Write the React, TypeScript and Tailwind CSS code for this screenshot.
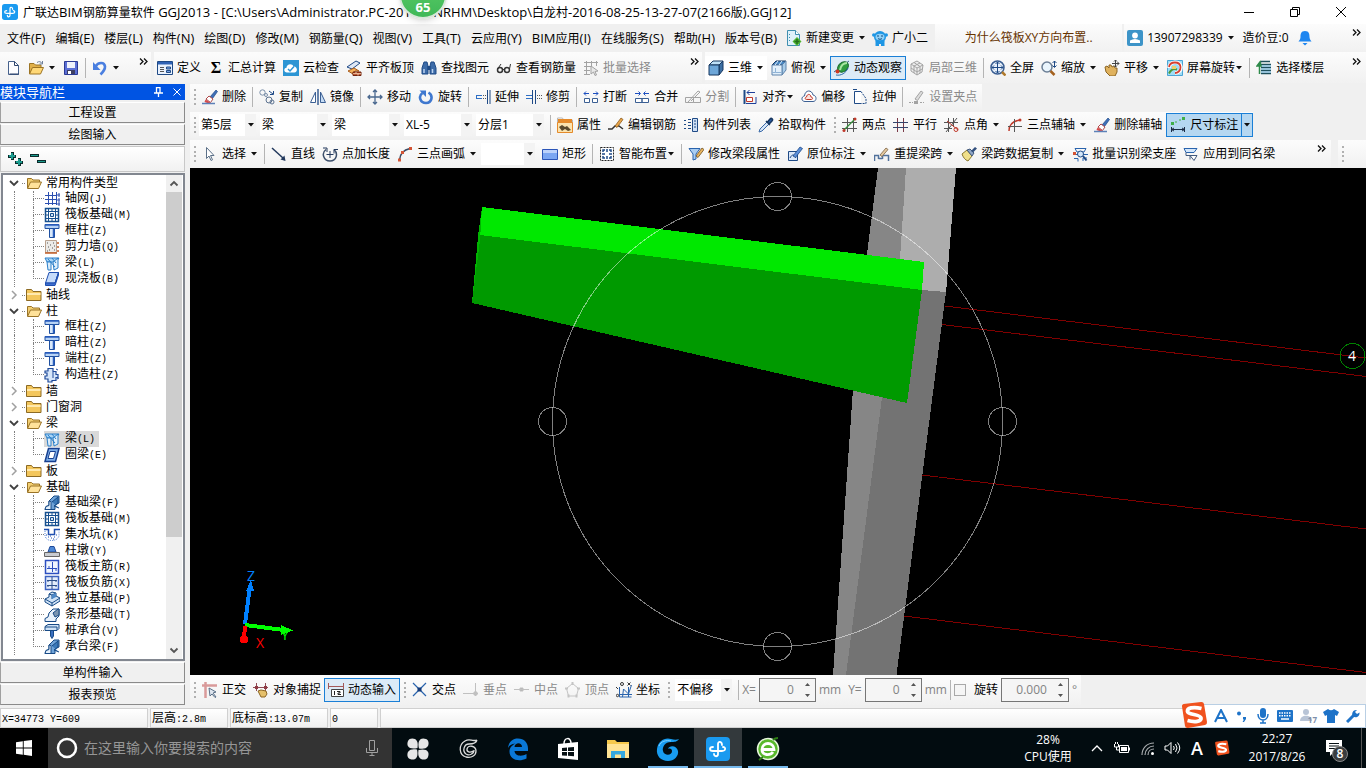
import { Fragment } from "react";
import type { ReactNode } from "react";
import clsx from "clsx";

const NAVY = "#1f4a86";
const BLUE = "#2f6fc4";
const RED = "#c0392b";
const GRAY = "#a3a3a3";

// 16x16 drawings for the toolbars and the tree
const glyphs: Record<string, ReactNode> = {
  newFile: (
    <>
      <path d="M3.5 1.5h6l4 4v9h-10z" fill="#fdfdff" stroke="#46618c" />
      <path d="M9.5 1.5v4h4M4.5 14h9.500" fill="none" stroke="#2c436b" />
    </>
  ),
  open: (
    <>
      <path d="M1.5 14V3.5H6L7.5 5H13v3" fill="#e0b04a" stroke="#9c7424" />
      <path d="M1.5 14l3-6.5h11l-3 6.500z" fill="#ffd877" stroke="#9c7424" />
      <path d="M9 2.5c2-1.500 4-1 5 1M14.5 1v3h-3" fill="none" stroke="#6d7f99" />
    </>
  ),
  save: (
    <>
      <path d="M1.5 1.5h13v13h-13z" fill="#5b6fd6" stroke="#2c3a94" />
      <path d="M4 2h8v6H4z" fill="#eef1fb" />
      <path d="M4 10h8v4H4z" fill="#3d3f63" />
      <path d="M5 11h3v3H5z" fill="#fff" />
    </>
  ),
  undo: (
    <>
      <path d="M3.5 6.5C6 2 12.500 1.500 13 6.500c.2 3-2 5.500-4.500 8" fill="none" stroke="#4a7fe0" strokeWidth="2.600" />
      <path d="M1 2v8h7.500z" fill="#4a7fe0" />
    </>
  ),
  define: (
    <>
      <path d="M.5 1.5h15v13H.5z" fill="#e9f1fd" stroke={NAVY} />
      <path d="M1 2h14v2.500H1z" fill="#2f62b5" />
      <path d="M3 7.5h4M3 9.5h4M3 11.5h4" stroke="#555" />
      <path d="M9.5 7h4v2h-4zM9.5 10.5h4v2h-4z" fill="#7aa5e8" stroke={NAVY} />
    </>
  ),
  cloud: (
    <>
      <path d="M0 0h16v16H0z" fill="#2c95d4" />
      <path d="M4 12.5c-3.500 0-3.500-4.500-.5-4.700C3.500 3.500 9.500 3 10.500 6.500c4-.5 4.800 6 .8 6z" fill="#fff" />
      <path d="M5 9l2 2 4-4.500" fill="none" stroke="#2c95d4" strokeWidth="1.500" />
    </>
  ),
  slabTop: (
    <>
      <path d="M1 7l9-6 4 2-8 6z" fill="#dfe8f5" stroke={NAVY} />
      <path d="M2 11l6-3 5 3H9l-2 3z" fill="#f4b25c" stroke="#a85a1a" />
      <path d="M7 12h8v3.500H7z" fill="#b3401f" stroke="#6f2410" />
      <path d="M7 13.7h8M10 12v1.700M12 13.7v1.800" stroke="#f2c9a8" />
    </>
  ),
  binoc: (
    <>
      <path d="M3 2h3l1 4v8H1V8zM13 2h-3L9 6v8h6V8z" fill="#3d6ba8" stroke={NAVY} />
      <path d="M6.5 6h3v4h-3z" fill={NAVY} />
      <path d="M3 9v4M11.5 9v4" stroke="#bcd2ef" strokeWidth="1.500" />
    </>
  ),
  glasses: (
    <>
      <circle cx="4" cy="10" r="2.500" fill="none" stroke="#333" strokeWidth="1.500" />
      <circle cx="11" cy="10" r="2.500" fill="none" stroke="#333" strokeWidth="1.500" />
      <path d="M6.5 9.500h2M1.5 9L5 4M13.5 9l1-5" fill="none" stroke="#333" />
    </>
  ),
  batch: (
    <>
      <path d="M1 2.500h14M1 6.500h8M1 10.500h6M1 14.500h6M3.500 1v14M8.500 1v6M13.500 1v5" stroke={GRAY} fill="none" />
      <path d="M8 6l7 5-3 .5 1.500 3.500-1.500.5-1.500-3.500-2.500 2z" fill="#e8e8e8" stroke={GRAY} />
    </>
  ),
  cube: (
    <>
      <path d="M1 5l4-4h10l-4 4z" fill="#bfe0f7" stroke="#17365f" />
      <path d="M11 5l4-4v9l-4 5z" fill="#3c6fa3" stroke="#17365f" />
      <path d="M1 5h10v10H1z" fill="#6da6d8" stroke="#17365f" />
    </>
  ),
  cubeTop: (
    <>
      <path d="M1 5l4-4h10l-4 4z" fill="#4687c4" stroke="#17365f" />
      <path d="M11 5l4-4v9l-4 5z" fill="#a9cdea" stroke="#5f83ab" />
      <path d="M1 5h10v10H1z" fill="#e2effa" stroke="#5f83ab" />
      <path d="M4 5l3-4M8 5l3-4" stroke="#dff0ff" />
      <path d="M4.5 8v4.500H1M4.5 12.500H11" stroke="#8fb2d4" fill="none" />
    </>
  ),
  orbit: (
    <>
      <path d="M0 12L15 1" stroke="#3a5f8a" />
      <ellipse cx="9" cy="7" rx="6" ry="4.500" transform="rotate(-40 9 7)" fill="#2f9d40" stroke="#1c6b31" />
      <path d="M6 10c1-5 4-7 7-7" stroke="#a8e6a2" strokeWidth="2" fill="none" />
      <circle cx="3.500" cy="11.500" r="2" fill="#cf3a24" />
      <path d="M2 15c5 1 10-2 12-7" stroke="#2c6aa5" fill="none" />
    </>
  ),
  cubeGray: (
    <>
      <path d="M2 4l6-3 6 4-1 7-5 3-6-4z" fill="#eee" stroke={GRAY} />
      <path d="M2 4l6 4 6-3M8 8v7M5 2.500l6 4M5 6v7M11 3L5 6M11 7v6M2 8l6 4 5-3" stroke={GRAY} fill="none" />
    </>
  ),
  fit: (
    <>
      <circle cx="7.500" cy="7.500" r="6.500" fill="#e8f1fb" stroke="#3b5f93" strokeWidth="1.500" />
      <path d="M7.5 2v11M2 7.500h11M5.500 4l2-2 2 2M5.500 11l2 2 2-2M4 5.500l-2 2 2 2M11 5.500l2 2-2 2" stroke={NAVY} fill="none" />
      <path d="M12 12l3.500 3.500" stroke="#b07a2c" strokeWidth="2.500" />
    </>
  ),
  zoom: (
    <>
      <circle cx="6" cy="7" r="5" fill="#eaf5fd" stroke="#6c7f96" strokeWidth="1.500" />
      <path d="M9.500 11l4 4" stroke="#a4611f" strokeWidth="2.500" />
      <path d="M13.500 1v6M11.500 3l2-2 2 2M11.500 5.500l2 2 2-2" stroke={NAVY} fill="none" />
    </>
  ),
  pan: (
    <>
      <path d="M1 7l2-1 2 2V5h2l1 2 2-1 1 2h2v4l-2 4H6L2 12z" fill="#e0b25e" stroke="#8b6524" />
      <path d="M11.500 0v7M8 3.500h7M10 1.500L11.500 0 13 1.500M13.500 2L15 3.500 13.500 5M10 5.500L11.500 7 13 5.500" stroke="#444" fill="none" />
    </>
  ),
  spinScreen: (
    <>
      <path d="M.5.5h15v15H.5z" fill="#9edcf5" stroke="#4aa5d6" />
      <path d="M2 8c0-7 11-8 12-1 .4 4-3 6-6 6" fill="none" stroke="#fff" strokeWidth="3.500" />
      <path d="M2 7c1-6 11-6 11.500 0 .3 4-3 6-5.500 6" fill="none" stroke="#d64030" strokeWidth="1.800" />
      <path d="M2 13.500c2-4 5-5 8-4" fill="none" stroke="#4c9a3a" strokeWidth="2" />
      <path d="M5 6h4v3H5z" fill="#f3cf6a" />
    </>
  ),
  floors: (
    <>
      <path d="M3 4.500l2-3h9M5 4.500h10M5 7.500h10M5 10.500h10M5 13.500h10" stroke="#1e4f5c" strokeWidth="1.500" fill="none" />
      <path d="M5 6h10M5 9h10M5 12h10" stroke="#6db7e4" />
      <path d="M1 6l3-4 1 4zM3.500 5v9" stroke="#2e8a4a" fill="#2e8a4a" strokeWidth="1.500" />
    </>
  ),
  erase: (
    <>
      <path d="M8 8l6-7 1.500 1.500-5 7z" fill="#3f6fb8" stroke={NAVY} strokeWidth=".7" />
      <path d="M4 10l3-3 4 3-2.500 3.500z" fill="#fff" stroke="#b04848" />
      <path d="M3.500 10.500l5 3-2 1-4-1.500z" fill="#d64b4b" />
      <path d="M0 14.500h13" stroke="#5c81b8" strokeWidth="1.500" />
    </>
  ),
  copy: (
    <>
      <circle cx="3.500" cy="3.500" r="2.700" fill="none" stroke="#7b8fa8" />
      <circle cx="7" cy="6" r="1.500" fill="none" stroke="#7b8fa8" />
      <circle cx="10" cy="11" r="3" fill="none" stroke="#5d7390" />
      <circle cx="13" cy="13" r="2" fill="none" stroke="#5d7390" />
      <path d="M10 2l4 3M14.500 2v3.500H11" stroke={NAVY} fill="none" />
    </>
  ),
  mirror: (
    <>
      <path d="M5.500 3v10.500H.5z" fill="#fff" stroke="#3b5f93" />
      <path d="M10.500 3v10.500h5z" fill="#c6dcf4" stroke="#3b5f93" />
      <path d="M8 0v16" stroke="#3b5f93" strokeWidth="1.500" />
    </>
  ),
  move: <path d="M8 1v14M1 8h14M6 3l2-2 2 2M6 13l2 2 2-2M3 6L1 8l2 2M13 6l2 2-2 2" stroke="#4a688f" strokeWidth="1.300" fill="none" />,
  rotate: (
    <>
      <path d="M4.500 4C0 7 2 14 8 14s7.500-7.500 2.500-10.500" stroke="#3f78cf" strokeWidth="2.600" fill="none" />
      <path d="M1.500 1.500H8V8z" fill="#3f78cf" />
    </>
  ),
  extend: (
    <>
      <path d="M1 6.500h6M1 9.500h6M1.500 6v4" stroke={BLUE} />
      <path d="M8 6.500h4M8 9.500h4" stroke="#555" strokeDasharray="1 1" />
      <path d="M12.500 1v14M15 1v14" stroke={NAVY} />
    </>
  ),
  trim: (
    <>
      <path d="M0 6.500h6M0 9.500h6" stroke={BLUE} />
      <path d="M6.500 1v14M9.500 1v14" stroke={NAVY} />
      <path d="M11 6.500h5M11 9.500h5" stroke="#555" strokeDasharray="1 1" />
    </>
  ),
  breakAt: (
    <>
      <path d="M1.500 9.500h5v4h-5zM9.500 9.500h5v4h-5z" fill="#fff" stroke="#3b5f93" />
      <path d="M1 4.500h5M3 2.500l-2 2 2 2M10 4.500h5M13 2.500l2 2-2 2" stroke="#1d4fc0" fill="none" />
    </>
  ),
  merge: (
    <>
      <path d="M1.500 9.500H8v4H1.500zM8 9.500h6.500v4H8z" fill="#fff" stroke="#3b5f93" />
      <path d="M1 4.500h5M4.500 2.500l2 2-2 2M10 4.500h5M11.500 2.500l-2 2 2 2" stroke="#1d4fc0" fill="none" />
    </>
  ),
  split: <path d="M.5 8.500h8v5h-8zM8.500 8.500h7v5h-7zM3 13L13 2l2 1-9 9" stroke={GRAY} fill="none" />,
  align: (
    <>
      <path d="M2.500 1v14" stroke={NAVY} strokeWidth="2" />
      <path d="M4.500 8.500h6v4h-6z" fill="#fff" stroke={RED} />
      <path d="M4 14.500h10M14 8v6.500M5 3.500h8M7.500 1L5 3.500 7.500 6" stroke="#1d3f9a" fill="none" />
    </>
  ),
  offset: (
    <>
      <path d="M4 12.500c-4 0-4-5-.5-5.500C4 .5 11 .5 12 6c4 .5 4 6.500 0 6.500z" fill="#fff" stroke="#3b5f93" />
      <path d="M5.500 10.500c-2 0-1.500-2.500 0-2.500.5-3.500 4-3.500 4.500 0 2 0 2 2.500.5 2.500z" fill="#fbe1dd" stroke={RED} />
    </>
  ),
  stretch: (
    <>
      <path d="M9 2.500H2.500v12H9" fill="#fff" stroke={NAVY} />
      <path d="M9 2.500l5 7v5H8" fill="none" stroke={NAVY} strokeDasharray="2 1" />
      <path d="M1 .5h4" stroke={NAVY} />
    </>
  ),
  grips: (
    <>
      <path d="M0 13.500h4M11 13.500h4" stroke={GRAY} strokeDasharray="2 1" />
      <path d="M6 10l6-8 2 1.500L8.500 11.500z" fill="#ddd" stroke={GRAY} />
      <path d="M5 12h4v3H5z" fill={GRAY} />
    </>
  ),
  props: (
    <>
      <path d="M.5 3V1h5l1 2h9v12H.5z" fill="#fff" stroke="#b8b8b8" />
      <path d="M1 2h14v3H1z" fill="#e58a2a" />
      <path d="M.5 5.500h15v10H.5z" fill="#fbe3ae" stroke="#e58a2a" />
      <path d="M2 10l3-2 3 2 2-1 4 4-3 1-3-2-3 2z" fill="#5a4a2c" />
    </>
  ),
  editBar: (
    <>
      <path d="M0 12h4l3-3h4l4 3" stroke="#333" strokeWidth="1.500" fill="none" />
      <path d="M7 9l6-8 2 1.500-6 8z" fill="#e8a54b" stroke="#8c5a1c" strokeWidth=".8" />
    </>
  ),
  list: (
    <>
      <path d="M1 3.500h2M1 7.500h2M1 11.500h2M5 2.500h3M5 5.500h3M5 8.500h3M5 11.500h3" stroke={NAVY} />
      <path d="M9.500 1.500h5v13h-5z" fill="#cfe0f6" stroke={NAVY} />
      <path d="M11 4h2M11 7h2M11 10h2" stroke={NAVY} />
    </>
  ),
  pick: (
    <>
      <path d="M1 15l1-3 7-7 2 2-7 7z" fill="#d7e6f8" stroke="#3b6aa8" />
      <path d="M8 4l4 4M9.500 5L12 2c1.500-1.500 3.500.5 2 2l-3 3z" stroke="#17365f" strokeWidth="1.500" fill="#2d5fa6" />
    </>
  ),
  twoPoint: (
    <>
      <path d="M5.500 1v14M11.500 1v14M0 5.500h15M0 11.500h15" stroke="#555" />
      <path d="M2 13L13 2" stroke="#388e3c" strokeWidth="1.300" />
      <circle cx="2" cy="13.500" r="1.500" fill={RED} />
      <circle cx="13" cy="2" r="1.500" fill={RED} />
    </>
  ),
  parallel: (
    <>
      <path d="M4.500 1v14M10.500 1v14" stroke="#7a3a48" />
      <path d="M0 5.500h15M0 10.500h15" stroke="#33446b" />
    </>
  ),
  pointAngle: (
    <>
      <path d="M4.500 1v14M9.500 1v9M0 5.500h14M0 11.500h8M13 1L2 15" stroke="#555" />
      <path d="M3 4l11 9" stroke={RED} />
      <circle cx="12" cy="12.500" r="2" fill="none" stroke={RED} />
    </>
  ),
  threeAxis: (
    <>
      <path d="M2 14C2 8 6 4 13 3" stroke={RED} fill="none" strokeWidth="1.500" />
      <path d="M7.500 2v13M1 9.500h14" stroke="#555" />
      <circle cx="13" cy="3" r="1.500" fill={RED} />
    </>
  ),
  dimension: (
    <>
      <path d="M1.500 10v5M14.500 10v5M1.500 12.500h13M4 11l-2.500 1.500L4 14M12 11l2.500 1.500L12 14" stroke="#1c2b45" fill="none" />
      <path d="M1 5h3v3H1zM12 0h3v3h-3z" fill="#3fae49" />
      <path d="M5 5h2M9 3h2" stroke="#3fae49" />
    </>
  ),
  cursor: <path d="M4.500 1.500v11L7 10l2 4.500 1.500-.7L8.500 9.500H12z" fill="#fff" stroke="#5b7088" />,
  line: (
    <>
      <path d="M1 2l11 10" stroke="#23395d" strokeWidth="1.500" />
      <path d="M14.500 15l-5-1.500 4-4z" fill="#23395d" />
    </>
  ),
  pointLen: (
    <>
      <path d="M4 3.500C-1 7 1.500 15 8 15s8.500-7.500 4-11.500" stroke="#3c4f6b" strokeWidth="1.500" fill="none" />
      <path d="M4.500 8.500h7M8 5v7M12 3.500h4M12 3.500v4M1 2h4v4" stroke="#23395d" fill="none" />
    </>
  ),
  arc: (
    <>
      <path d="M2.500 14C3 8 6 4 13 2.500" stroke="#3d4c63" fill="none" strokeWidth="1.500" />
      <path d="M1 12.500h3v3H1zM4 5h3v3H4zM12 1h3v3h-3z" fill="#d35435" />
    </>
  ),
  rect: (
    <>
      <path d="M.5 3.500h15v10H.5z" fill="#7ba6f2" stroke="#2b55b8" />
      <path d="M1 4h14v3H1z" fill="#bcd2fb" />
    </>
  ),
  smart: (
    <>
      <path d="M1.500 1.500h13v13h-13z" fill="#fff" stroke="#222" strokeDasharray="2 1" />
      <path d="M4 6V4h2M10 4h2v2M12 10v2h-2M6 12H4v-2M8 3v3M8 10v3M3 8h3M10 8h3" stroke={NAVY} fill="none" strokeWidth="1.500" />
    </>
  ),
  editSeg: (
    <>
      <path d="M1 2.500h11L8 8v5l-3 1V8z" fill="#a9cdf2" stroke="#2963ad" />
      <path d="M8 10l6-8 2 1.500-6 8z" fill="#e9b45e" stroke="#70501f" strokeWidth=".8" />
    </>
  ),
  inSitu: (
    <>
      <path d="M1.500 5.500h9v9h-9z" fill="#dbe8f9" stroke={NAVY} />
      <path d="M3 12c2-4 4-4 6 0" stroke={NAVY} fill="none" />
      <path d="M6 10l7-9 2.500 1.500-7 9z" fill="#5b8fdb" stroke={NAVY} strokeWidth=".8" />
    </>
  ),
  relift: (
    <>
      <path d="M.5 15V9.500h4V13M8.500 13V9.500h6V15M4.500 12.500h4" stroke="#50719c" fill="none" strokeWidth="1.500" />
      <path d="M6 9l6-7 2 1.500-6 7z" fill="#e3c8a0" stroke="#7c6242" strokeWidth=".8" />
    </>
  ),
  brush: (
    <>
      <path d="M1 8l5-4 5 6-4 5c-3-1-5-4-6-7z" fill="#f0e08a" stroke="#8a7830" />
      <path d="M6 4l3-1 4 4-2 3z" fill="#8fa6c5" stroke="#41597c" />
      <path d="M10 5l4-4 2 1.500-4 4z" fill="#33507e" />
    </>
  ),
  recognise: (
    <>
      <path d="M3 2.500h11l-2 3.500H5zM1 8.500h15M2 12.500h4v3M11 15v-3h4" stroke="#2963ad" fill="none" />
      <path d="M1 6h3v3H1z" fill="#d35435" />
      <circle cx="8.500" cy="8" r="3" fill="#d4e7fb" stroke={NAVY} />
      <path d="M11 10l3.500 4.500" stroke={NAVY} strokeWidth="2" />
    </>
  ),
  applySame: (
    <>
      <path d="M1 2.500h13l-3 4H3z" fill="#d4e7fb" stroke="#2963ad" />
      <path d="M3 6.500v3h4v4M7 9.500h7l-3 5z" fill="#fff" stroke="#41597c" />
    </>
  ),
  ortho: (
    <>
      <path d="M0 3.500h15M3.500 0v16" stroke="#d99a9a" strokeWidth="2.500" />
      <path d="M7 6l7 4-3 1 3 4-1 .5-3-3.500-2 2z" fill="#dfe6ef" stroke="#5b7088" />
    </>
  ),
  snap: (
    <>
      <path d="M3.500 1v8M12.500 1v8M0 5.500h15" stroke="#8f4a55" />
      <path d="M2 4h3v3H2zM11 4h3v3h-3z" fill="#8f3b44" />
      <path d="M5 9l3-1 5 1 1 3-2 3H8z" fill="#e5c06b" stroke="#8b6524" />
    </>
  ),
  dynInput: (
    <>
      <path d="M.5 1v6M15.500 1v6M1 4.500h14" stroke="#a45a5a" />
      <path d="M3.500 7.500h12v7h-12z" fill="#fff" stroke="#444" />
      <path d="M6.500 9v4M9 9.500h3V11h-2v1.500h3" stroke="#222" fill="none" />
    </>
  ),
  cross: (
    <>
      <path d="M1 1l13 13M14 1L1 14" stroke="#2963ad" strokeWidth="1.200" />
      <path d="M5.500 5.500h4v4h-4z" fill="#143a78" />
    </>
  ),
  perp: <path d="M0 11.500h15M12.500 1v13M11 10h3v3h-3z" stroke="#c0c0c0" fill="#c0c0c0" />,
  mid: <path d="M0 7.500h15M6 6h3v3H6z" stroke="#c0c0c0" fill="#b0b0b0" />,
  vertex: (
    <>
      <path d="M7.500 1.500l6 5-2 7.500h-8l-2-7.500z" fill="none" stroke="#c4c4c4" />
      <path d="M6.500 0h2v3h-2zM0 5.500h3v2H0zM12 5.500h3v2h-3zM2.500 12.500h2v3h-2zM10.500 12.500h2v3h-2z" fill="#c4c4c4" />
    </>
  ),
  coord: (
    <>
      <path d="M3.500 5v10h12M4 12.500h12M6.500 15l1-8 5 5 3-9M12.500 5v10" stroke="#2963ad" fill="none" />
      <circle cx="6" cy="2" r="1.500" fill="none" stroke="#333" />
      <circle cx="1.500" cy="13.500" r="1.200" fill="none" stroke="#333" />
      <path d="M11.500.5l3 3M14.500.5l-3 3M0 5l2 2" stroke="#333" />
    </>
  ),
  newChange: (
    <>
      <path d="M1.500.5h8l4 4v11h-12z" fill="#dff1fa" stroke="#3f8fb0" />
      <path d="M9.500.5v4h4" fill="#fff" stroke="#3f8fb0" />
      <path d="M3.500 4v8" stroke="#3f8fb0" strokeDasharray="1 2" />
      <path d="M11 7l4.500 4.500L11 16l-4.500-4.500z" fill="#4fb52f" />
      <path d="M11 9v5M8.500 11.500h5" stroke="#256d1e" strokeWidth="1.500" />
    </>
  ),
  mascot: (
    <>
      <circle cx="8" cy="7" r="6" fill="#1e96e4" />
      <circle cx="1.800" cy="5" r="1.800" fill="#1e96e4" />
      <circle cx="14.200" cy="5" r="1.800" fill="#1e96e4" />
      <path d="M3.500 11h9V16H9v-2H7v2H3.500z" fill="#1e96e4" />
      <ellipse cx="8" cy="7" rx="4.500" ry="3.200" fill="#8fd0f7" />
      <path d="M5 6h2M9 6h2M6 8.500c1 1 3 1 4 0" stroke="#124d80" fill="none" />
    </>
  ),
  user: (
    <>
      <rect width="16" height="16" rx="2" fill="#3d94c8" />
      <circle cx="8" cy="5.500" r="2.900" fill="#fff" />
      <path d="M3 13V10.500q5-3 10 0V13z" fill="#fff" />
    </>
  ),
  bell: <path d="M8 1c4 0 4.500 3 4.500 6 0 2 1 3 2 4.500h-13c1-1.500 2-2.500 2-4.500C3.500 4 4 1 8 1zM5.500 13h5L8 15.500z" fill="#1e86f0" />,
  // tree
  folderOpen: (
    <>
      <path d="M1.500 13V3.500h4L7 5h6.500v3" fill="#f3cf72" stroke="#9a7326" />
      <path d="M1.500 13.500l3-6.500h11l-3 6.500z" fill="#ffe29a" stroke="#9a7326" />
    </>
  ),
  folder: (
    <>
      <path d="M.5 13.500v-11h5l1.500 2h8v9z" fill="#f3c65c" stroke="#8c6a24" />
      <path d="M1 6h13.500v2H1z" fill="#ffe9ae" />
    </>
  ),
  axisNet: (
    <path d="M4.500 1v13M8.500 1v13M12.500 1v13M1 4.500h12M1 8.500h12M1 12.500h12M14 3h2v2h-2zM14 8h2v2h-2zM14 12h2v2h-2z" stroke="#2c4fb0" fill="none" />
  ),
  raft: (
    <>
      <path d="M1.500 1.500h13v13h-13z" fill="#fff" stroke="#17508f" strokeWidth="1.500" />
      <path d="M4.500 2v12M11.500 2v12M2 4.500h12M2 11.500h12M8 2v2M8 12v2M2 8h2M12 8h2" stroke="#17508f" />
      <path d="M6.500 6.500h3v3h-3z" fill="#cfe3f6" stroke="#17508f" />
    </>
  ),
  column: (
    <>
      <path d="M1 1.500h14v4H1z" fill="#b7d3f5" stroke="#1e4fa0" />
      <path d="M5.500 5.500h5v9h-5z" fill="#d9e9fb" stroke="#1e4fa0" />
      <path d="M1 2h14M9.500 6v8" stroke="#2b5fc0" strokeWidth="1.500" />
    </>
  ),
  shearWall: (
    <>
      <path d="M1.500 1.500h11v12h-11z" fill="#ecebe8" stroke="#b9a28f" />
      <path d="M3 4h1M6 6h1M9 4h1M4 8h1M8 9h1M5 11h1M10 11h1M3 12h1M10 7h1" stroke="#555" />
      <path d="M1 14h12M13 4h2M13 8h2M13 12h2" stroke="#c25f2a" strokeWidth="1.500" />
    </>
  ),
  beam: (
    <>
      <path d="M1 3h14l-3 4H3z" fill="#a8d4f6" stroke="#2a7fc9" />
      <path d="M3 7h4v8H4zM9 7l5-4v10l-4 2z" fill="#dceefc" stroke="#2a7fc9" />
      <path d="M4 4l7 8M8 3l4 5" stroke="#2a7fc9" />
    </>
  ),
  slab: (
    <>
      <path d="M5 1.500h9.500L11 12H1.500z" fill="#c5dbfa" stroke="#1f4fb0" />
      <path d="M1.500 12v2.500H11L14.500 4v-2.500L11 12z" fill="#3f6fd0" stroke="#1f4fb0" />
    </>
  ),
  tieColumn: (
    <>
      <path d="M4 1.500h5v3h3v3h2v3h-2v3H8v1.500H4v-3H1v-3h2v-3H1v-2h3z" fill="#d6e6fa" stroke="#1f4a9a" strokeWidth="1.200" />
      <path d="M12 2l2 1M13 12l2-1M9 5v6" stroke="#1f4a9a" />
    </>
  ),
  ringBeam: (
    <>
      <path d="M4.500 1.500H15l-3.500 13H1z" fill="#7fb0ea" stroke="#173f8f" strokeWidth="1.500" />
      <path d="M6 4.500h5.500l-2 7H4z" fill="#fff" stroke="#173f8f" />
    </>
  ),
  baseBeam: (
    <>
      <path d="M1 14.500l1-3 3-1V6l5-5h5v7l-4 2v4.500z" fill="#6fa3d8" stroke="#174a86" />
      <path d="M5 6l2 .5v8H1l1-3 3-1z" fill="#e5f1fc" stroke="#174a86" />
      <path d="M8 7l6-5v6l-4 3 5 2" fill="#3a78b8" stroke="#174a86" />
    </>
  ),
  pit: (
    <>
      <path d="M0 2.500h4.500v5h6v-5H16" stroke="#1f4fb0" fill="none" strokeWidth="1.500" />
      <path d="M1 4v5c1 3 3 4.500 7 4.500s6-2 7-4.500V4" fill="none" stroke="#5c8ad8" strokeDasharray="1 1" />
      <path d="M4 10h1M7 11h1M10 10h1M6 9h1M9 12h1M12 8h1M2 8h1" stroke="#1f4fb0" />
    </>
  ),
  pier: (
    <>
      <path d="M6 3.500h4L12 9H4z" fill="#4d88d6" stroke="#1f4a9a" />
      <path d="M.5 9.500h15v4H.5z" fill="#c9ccd1" stroke="#666" />
    </>
  ),
  mainBar: (
    <>
      <path d="M1.500 1.500h13v13h-13z" fill="#f0f6ff" stroke="#2c4fc0" strokeWidth="1.500" />
      <path d="M3 9.500h10M8.500 3v10M5 7v3M12 9v3" stroke="#2c4fc0" fill="none" />
    </>
  ),
  negBar: (
    <>
      <path d="M1.500 1.500h13v13h-13z" fill="#e3ecfb" stroke="#3c62c0" strokeWidth="1.500" />
      <path d="M3 5.500h10M3 10.500h10M8 2v12M4 5v2M12 5v2M4 10v2M12 10v2" stroke="#2c4f8a" fill="none" />
    </>
  ),
  isoBase: (
    <>
      <path d="M1 8l4-2V3l3-2 4 1v3l4 2v3l-8 5-7-4z" fill="#cfe2f6" stroke="#174a86" />
      <path d="M1 8l7 4 8-5M8 12v3M5 3l3 1v4M12 2L8 4" stroke="#174a86" fill="none" />
      <path d="M8 4l4-2v4L8 8z" fill="#4d88c8" />
    </>
  ),
  stripBase: (
    <>
      <path d="M1 14.500v-3L4 10l1-4 4-4h6v7l-3 3v2.500z" fill="#e8f1fb" stroke="#174a86" />
      <path d="M9 6l5-4h1v6l-4 2z" fill="#7a94b0" stroke="#174a86" />
    </>
  ),
  pileCap: (
    <>
      <path d="M1 3.500l3-2h11v4l-2 2H1z" fill="#cfe2f6" stroke="#174a86" />
      <path d="M6.500 7.500h3V13L8 15.500 6.500 13z" fill="#3a6fc0" stroke="#174a86" />
      <path d="M1 4h12v3" stroke="#174a86" fill="none" />
    </>
  ),
};

function Glyph({ name }: { name: string }) {
  return (
    <svg viewBox="0 0 16 16" className="size-4 shrink-0" aria-hidden="true">
      {glyphs[name]}
    </svg>
  );
}

function Caret({ className }: { className?: string }) {
  return (
    <svg viewBox="1 0 8 4" className={clsx("h-1 w-2 shrink-0", className)} aria-hidden="true">
      <path d="M2 0h6L5 3.500z" fill="#111" />
    </svg>
  );
}

// Latin runs are set one size above the Chinese ones
function Mixed({ text }: { text: string }) {
  return (
    <>
      {text.split(/([\x20-\x7e]+)/).map((part, i) => (
        <span key={i} className={i % 2 ? "text-[13px] leading-4" : ""}>
          {part}
        </span>
      ))}
    </>
  );
}

type ToolProps = {
  icon?: string;
  label?: string;
  arrow?: "far" | "near";
  disabled?: boolean;
  active?: boolean;
};

function Tool({ icon, label, arrow, disabled, active }: ToolProps) {
  return (
    <button
      disabled={disabled}
      aria-label={label ?? icon}
      className={clsx(
        "flex h-[22px] shrink-0 items-center gap-1 px-[3px] whitespace-nowrap",
        disabled && "text-[#8a8a8a]",
        active && "bg-[#dcebf7] ring-1 ring-[#1a7fd6]",
      )}
    >
      {icon === "sum" ? <span className="w-4 text-center font-['Liberation_Serif'] text-base font-bold">Σ</span> : icon && <Glyph name={icon} />}
      {label && <span>{label}</span>}
      {arrow && <Caret className={arrow === "near" ? "-ml-1" : ""} />}
    </button>
  );
}

function Sep() {
  return <span className="mx-0.5 h-5 w-px shrink-0 bg-[#b4b4b4]" />;
}

function Grip() {
  return (
    <span className="ml-1 flex h-4 w-1 shrink-0 flex-col justify-between">
      {[0, 1, 2, 3].map((i) => (
        <span key={i} className="size-0.5 bg-[#b0b0b0]" />
      ))}
    </span>
  );
}

function More({ className }: { className?: string }) {
  return (
    <button aria-label="more" className={clsx("shrink-0", className)}>
      <svg viewBox="0 0 10 7" className="h-[7px] w-2.5" aria-hidden="true">
        <path d="M1 .5l3 3-3 3M5 .5l3 3-3 3" fill="none" stroke="#111" strokeWidth="1.300" />
      </svg>
    </button>
  );
}

function Combo({ name, value, className }: { name: string; value: string; className: string }) {
  return (
    <span className={clsx("mr-[3px] flex h-[22px] shrink-0 items-stretch bg-white", className)}>
      <select aria-label={name} defaultValue={value} className="min-w-0 flex-1 appearance-none bg-white pl-0.5">
        <option value={value}>{value}</option>
      </select>
      <span className="flex w-[11px] items-center justify-center bg-[#f3f3f3]">
        <Caret />
      </span>
    </span>
  );
}

const panel = "flex h-full items-center gap-px bg-linear-to-b from-[#fcfcfc] to-[#f1f1f1]";

type Item = ToolProps | "|";

function Tools({ items }: { items: Item[] }) {
  return (
    <>
      {items.map((it, i) => (
        <Fragment key={i}>{it === "|" ? <Sep /> : <Tool {...it} />}</Fragment>
      ))}
    </>
  );
}

const viewTools: Item[] = [
  { icon: "cubeTop", label: "俯视", arrow: "far" },
  { icon: "orbit", label: "动态观察", active: true },
  { icon: "cubeGray", label: "局部三维", disabled: true },
  "|",
  { icon: "fit", label: "全屏" },
  { icon: "zoom", label: "缩放", arrow: "far" },
  { icon: "pan", label: "平移", arrow: "far" },
  { icon: "spinScreen", label: "屏幕旋转", arrow: "near" },
  "|",
  { icon: "floors", label: "选择楼层" },
];

const mainTools: Item[] = [
  { icon: "define", label: "定义" },
  { icon: "sum", label: "汇总计算" },
  { icon: "cloud", label: "云检查" },
  { icon: "slabTop", label: "平齐板顶" },
  { icon: "binoc", label: "查找图元" },
  { icon: "glasses", label: "查看钢筋量" },
  { icon: "batch", label: "批量选择", disabled: true },
];

const editTools: Item[] = [
  { icon: "erase", label: "删除" },
  "|",
  { icon: "copy", label: "复制" },
  { icon: "mirror", label: "镜像" },
  "|",
  { icon: "move", label: "移动" },
  { icon: "rotate", label: "旋转" },
  "|",
  { icon: "extend", label: "延伸" },
  { icon: "trim", label: "修剪" },
  "|",
  { icon: "breakAt", label: "打断" },
  { icon: "merge", label: "合并" },
  { icon: "split", label: "分割", disabled: true },
  "|",
  { icon: "align", label: "对齐", arrow: "near" },
  { icon: "offset", label: "偏移" },
  { icon: "stretch", label: "拉伸" },
  "|",
  { icon: "grips", label: "设置夹点", disabled: true },
];

const beamTools: Item[] = [
  { icon: "rect", label: "矩形" },
  "|",
  { icon: "smart", label: "智能布置", arrow: "near" },
  "|",
  { icon: "editSeg", label: "修改梁段属性" },
  { icon: "inSitu", label: "原位标注", arrow: "far" },
  { icon: "relift", label: "重提梁跨", arrow: "far" },
  { icon: "brush", label: "梁跨数据复制", arrow: "far" },
  { icon: "recognise", label: "批量识别梁支座" },
  { icon: "applySame", label: "应用到同名梁" },
];

const menus = [
  "文件(F)", "编辑(E)", "楼层(L)", "构件(N)", "绘图(D)", "修改(M)", "钢筋量(Q)", "视图(V)",
  "工具(T)", "云应用(Y)", "BIM应用(I)", "在线服务(S)", "帮助(H)", "版本号(B)",
];

type Leaf = { icon: string; name: string; k: string; selected?: boolean };
type Group = { name: string; items?: Leaf[] };

const tree: Group[] = [
  {
    name: "常用构件类型",
    items: [
      { icon: "axisNet", name: "轴网", k: "J" },
      { icon: "raft", name: "筏板基础", k: "M" },
      { icon: "column", name: "框柱", k: "Z" },
      { icon: "shearWall", name: "剪力墙", k: "Q" },
      { icon: "beam", name: "梁", k: "L" },
      { icon: "slab", name: "现浇板", k: "B" },
    ],
  },
  { name: "轴线" },
  {
    name: "柱",
    items: [
      { icon: "column", name: "框柱", k: "Z" },
      { icon: "column", name: "暗柱", k: "Z" },
      { icon: "column", name: "端柱", k: "Z" },
      { icon: "tieColumn", name: "构造柱", k: "Z" },
    ],
  },
  { name: "墙" },
  { name: "门窗洞" },
  {
    name: "梁",
    items: [
      { icon: "beam", name: "梁", k: "L", selected: true },
      { icon: "ringBeam", name: "圈梁", k: "E" },
    ],
  },
  { name: "板" },
  {
    name: "基础",
    items: [
      { icon: "baseBeam", name: "基础梁", k: "F" },
      { icon: "raft", name: "筏板基础", k: "M" },
      { icon: "pit", name: "集水坑", k: "K" },
      { icon: "pier", name: "柱墩", k: "Y" },
      { icon: "mainBar", name: "筏板主筋", k: "R" },
      { icon: "negBar", name: "筏板负筋", k: "X" },
      { icon: "isoBase", name: "独立基础", k: "P" },
      { icon: "stripBase", name: "条形基础", k: "T" },
      { icon: "pileCap", name: "桩承台", k: "V" },
      { icon: "baseBeam", name: "承台梁", k: "F" },
    ],
  },
];

function TreeLeaf({ leaf, last }: { leaf: Leaf; last: boolean }) {
  return (
    <li className="flex h-4 items-center pl-[11px]">
      <span className="h-4 w-[19px] shrink-0 border-l border-dotted border-[#808080]" />
      <span className="h-4 w-[11px] shrink-0">
        <span className="block h-2 border-b border-l border-dotted border-[#808080]" />
        {!last && <span className="block h-2 border-l border-dotted border-[#808080]" />}
      </span>
      <span className={clsx("flex h-4 items-center gap-[5px] whitespace-nowrap", leaf.selected && "bg-[#d9d9d9] pr-1")}>
        <Glyph name={leaf.icon} />
        <span>
          {leaf.name}
          <span className="font-['Liberation_Mono'] text-[10px]">({leaf.k})</span>
        </span>
      </span>
    </li>
  );
}

function TreeGroup({ group }: { group: Group }) {
  const open = !!group.items;
  return (
    <li>
      <div className="flex h-4 items-center pl-[5px]">
        <svg viewBox="0 0 12 12" className="size-3 shrink-0" aria-hidden="true">
          {open ? (
            <path d="M2 4l4 4 4-4" fill="none" stroke="#404040" strokeWidth="1.800" />
          ) : (
            <path d="M4 2l4 4-4 4" fill="none" stroke="#a0a0a0" strokeWidth="1.500" />
          )}
        </svg>
        <span className="mr-px ml-0.5 w-[3px] border-t border-dotted border-[#808080]" />
        <Glyph name={open ? "folderOpen" : "folder"} />
        <span className="ml-1">{group.name}</span>
      </div>
      {group.items && (
        <ul>
          {group.items.map((leaf, i) => (
            <TreeLeaf key={leaf.name} leaf={leaf} last={i === group.items!.length - 1} />
          ))}
        </ul>
      )}
    </li>
  );
}

function NavButton({ children }: { children: ReactNode }) {
  return (
    <button className="h-[21px] shrink-0 border border-t-white border-r-[#8a8a8a] border-b-[#8a8a8a] border-l-[#a0a0a0] bg-[#f0f0f0] leading-4">
      {children}
    </button>
  );
}

function Sidebar() {
  return (
    <aside className="flex w-[185px] shrink-0 flex-col gap-px pb-px">
      <div className="mb-px flex h-4 shrink-0 items-center bg-[#0054e3] text-[13px] leading-4 text-white">
        <span>模块导航栏</span>
        <button aria-label="pin" className="mr-2.5 ml-auto">
          <svg viewBox="0 0 9 10" className="h-2.5 w-[9px]">
            <path d="M2.500 0v5.500M6 0v5.500M2.500.5h4M0 6h9M4.500 6v4" stroke="#fff" strokeWidth="1.300" fill="none" />
          </svg>
        </button>
        <button aria-label="close panel" className="mr-1">
          <svg viewBox="0 0 8 8" className="size-2">
            <path d="M.5.5l7 7M7.500.5l-7 7" stroke="#fff" />
          </svg>
        </button>
      </div>
      <NavButton>工程设置</NavButton>
      <NavButton>绘图输入</NavButton>
      <div className="flex h-[26px] shrink-0 items-center gap-1.5 border border-[#c8c8c8] bg-linear-to-b from-white to-[#f1f1f1] pl-1.5">
        <button aria-label="expand all">
          <svg viewBox="0 0 17 16" className="h-4 w-[17px]" shapeRendering="crispEdges">
            <path d="M5 1v8M1 5h8M12 7v8M8 11h8" stroke="#0b2b2b" strokeWidth="3" />
            <path d="M5 2v6M2 5h6M12 8v6M9 11h6" stroke="#1b9c8e" strokeWidth="1.200" />
          </svg>
        </button>
        <button aria-label="collapse all">
          <svg viewBox="0 0 17 16" className="h-4 w-[17px]" shapeRendering="crispEdges">
            <path d="M0 4.500h9M7 10.500h9" stroke="#0b2b2b" strokeWidth="3" />
            <path d="M1 4.500h7M8 10.500h7" stroke="#1b9c8e" />
          </svg>
        </button>
      </div>
      <div className="ml-px flex min-h-0 flex-1 border-2 border-[#828790] bg-white">
        <ul className="min-w-0 flex-1 overflow-hidden">
          {tree.map((g) => (
            <TreeGroup key={g.name} group={g} />
          ))}
        </ul>
        <div className="mr-px flex w-4 shrink-0 flex-col items-center bg-[#f0f0f0]">
          <svg viewBox="0 0 16 17" className="h-[17px] w-4">
            <path d="M4.500 10.500L8 7l3.500 3.500" fill="none" stroke="#555" strokeWidth="1.800" />
          </svg>
          <span className="w-full flex-[345] bg-[#cdcdcd]" />
          <span className="flex-[105]" />
          <svg viewBox="0 0 16 17" className="h-[17px] w-4">
            <path d="M4.500 6.500L8 10l3.500-3.500" fill="none" stroke="#555" strokeWidth="1.800" />
          </svg>
        </div>
      </div>
      <NavButton>单构件输入</NavButton>
      <NavButton>报表预览</NavButton>
    </aside>
  );
}

function Viewport() {
  return (
    <div className="min-h-0 flex-1 bg-black">
      <svg viewBox="190 168 1176 507" preserveAspectRatio="xMinYMin slice" className="block size-full" shapeRendering="crispEdges">
        <path d="M945 306L1366 358M942 324.500L1366 376.500M922 475L1366 529M904 616L1366 672.500" stroke="#800000" />
        <path d="M878 168H906L900 259L846 675H833L857 332z" fill="#868686" />
        <path d="M906 168H956L946 293L900 288V259z" fill="#adadad" />
        <path d="M900 286L946 292L896.500 675H846L900 259z" fill="#737373" />
        <path d="M900 255L924 262L946 292L922 290L900 286z" fill="#adadad" />
        <path d="M482 207L924 262L922 290L479 236z" fill="#00e800" />
        <path d="M480 235L922 290L907 403L472 303z" fill="#009a00" />
        <path d="M482 207L480 240L472 303L478 236z" fill="#00b400" />
        <g fill="none" stroke="#fff" strokeOpacity=".5">
          <circle cx="777.500" cy="421.500" r="225" />
          <circle cx="777.500" cy="196.500" r="14" />
          <circle cx="777.500" cy="646.500" r="14" />
          <circle cx="552.500" cy="421.500" r="14" />
          <circle cx="1002.500" cy="421.500" r="14" />
        </g>
        <circle cx="1352.500" cy="356" r="12.500" fill="none" stroke="#008000" />
        <text x="1352" y="361" textAnchor="middle" fontSize="14" fill="#fff" fontFamily="Open Sans">4</text>
        <g strokeWidth="4">
          <path d="M245 624L249.500 590" stroke="#0080ff" />
          <path d="M251 580L254 591L246 591z" fill="#0080ff" />
          <path d="M245 625L284 630" stroke="#00ff00" />
          <path d="M293 630.500L281 625v10z" fill="#00ff00" />
          <path d="M245 626L244 638" stroke="#ff0000" />
        </g>
        <circle cx="244" cy="639.500" r="4" fill="#ff0000" />
        <g fontSize="14" fontFamily="Open Sans" textAnchor="middle">
          <text x="251" y="581" fill="#0080ff">Z</text>
          <text x="285" y="640" fill="#00ff00">Y</text>
          <text x="260" y="648" fill="#ff0000">X</text>
        </g>
      </svg>
    </div>
  );
}

function Spin({ id, value, className }: { id: string; value: string; className: string }) {
  return (
    <span className={clsx("flex h-6 shrink-0 items-center border border-[#767676] bg-[#f5f5f5] pr-1", className)}>
      <input id={id} defaultValue={value} disabled className="min-w-0 flex-1 pr-2.5 text-right text-[#838383]" />
      <svg viewBox="0 0 7 16" className="h-4 w-[7px] shrink-0" aria-hidden="true">
        <path d="M1 4l2.500-3L6 4zM1 12l2.500 3L6 12z" fill="#555" />
      </svg>
    </span>
  );
}

function SnapBar() {
  return (
    <div className="flex h-[31px] shrink-0 items-center overflow-hidden pb-px">
      <div className={clsx(panel, "pr-1")}>
        <Grip />
        <Tools
          items={[
            { icon: "ortho", label: "正交" },
            { icon: "snap", label: "对象捕捉" },
            { icon: "dynInput", label: "动态输入", active: true },
          ]}
        />
        <Grip />
        <Tools
          items={[
            { icon: "cross", label: "交点" },
            { icon: "perp", label: "垂点", disabled: true },
            { icon: "mid", label: "中点", disabled: true },
            { icon: "vertex", label: "顶点", disabled: true },
            { icon: "coord", label: "坐标" },
          ]}
        />
        <Grip />
        <Combo name="偏移方式" value="不偏移" className="ml-0.5 w-[57px]" />
        <Sep />
        <span className="flex items-center gap-[3px] text-[#838383]">
          <label htmlFor="dx">X=</label>
          <Spin id="dx" value="0" className="w-[57px]" />
          <span className="mr-1">mm</span>
          <label htmlFor="dy">Y=</label>
          <Spin id="dy" value="0" className="w-[57px]" />
          <span>mm</span>
        </span>
        <Sep />
        <label className="mr-0.5 flex items-center gap-2">
          <input type="checkbox" className="size-3 appearance-none border border-[#a8a8a8] bg-[#f5f5f5]" />
          旋转
        </label>
        <Spin id="angle" value="0.000" className="w-[68px]" />
        <label htmlFor="angle" className="ml-0.5 text-[#838383]">°</label>
      </div>
    </div>
  );
}

function StatusCell({ children, className }: { children?: ReactNode; className: string }) {
  return (
    <div className={clsx("h-5 border border-[#d0d0d0] bg-linear-to-b from-white to-[#f0f0f0] pl-px leading-[18px] whitespace-nowrap", className)}>
      {children}
    </div>
  );
}

const mono = "font-['Liberation_Mono'] text-[10px]";

function StatusBar() {
  return (
    <div className="relative flex h-[22px] shrink-0 items-end gap-0.5 bg-[#f0f0f0]">
      <StatusCell className="w-[148px]"><span className={mono}>X=34773 Y=609</span></StatusCell>
      <StatusCell className="w-[78px]">层高<span className={mono}>:2.8m</span></StatusCell>
      <StatusCell className="w-[98px]">底标高<span className={mono}>:13.07m</span></StatusCell>
      <StatusCell className="w-[48px]"><span className={mono}>0</span></StatusCell>
      <StatusCell className="flex-1" />
      <ImeBar />
    </div>
  );
}

function SogouMark({ className }: { className: string }) {
  return (
    <svg viewBox="0 0 28 28" className={className} aria-hidden="true">
      <path d="M2 5.500Q1.500 3.500 3.500 3L21 1q2.500-.3 3 2l3 18q.3 2.500-2 3L8 27q-2.500.3-3-2z" fill="#f0521e" />
      <path d="M21.500 7.500C13 5.500 7 7 7.500 10.500c.5 3.500 13 2.500 13.500 6.500.4 3.500-6 4.500-13.500 2.500" fill="none" stroke="#fff" strokeWidth="3.800" />
    </svg>
  );
}

// floating input-method bar that sits on top of the status bar
function ImeBar() {
  return (
    <div className="absolute right-0 bottom-0 flex h-6 w-[177px] items-center gap-[7px] border border-[#b9cfe4] bg-white pl-6 text-[#1e73c8] *:shrink-0">
      <SogouMark className="absolute -top-1 -left-2.5 size-7" />
      <svg viewBox="0 0 14 14" className="size-3.5">
        <path d="M1 13L7 1l6 12M3.500 9h7" fill="none" stroke="currentColor" strokeWidth="2" />
      </svg>
      <svg viewBox="0 0 14 14" className="size-3.5">
        <circle cx="4" cy="4.500" r="2" fill="currentColor" />
        <path d="M8 8h3v2l-2 3H7.500L9 10.500H8z" fill="currentColor" />
      </svg>
      <svg viewBox="0 0 14 16" className="h-4 w-3.5">
        <rect x="4" y="0" width="6" height="10" rx="3" fill="currentColor" />
        <path d="M2 6c0 8 10 8 10 0M7 12v3M4 15h6" fill="none" stroke="currentColor" strokeWidth="1.500" />
      </svg>
      <svg viewBox="0 0 16 12" className="h-3 w-4">
        <rect width="16" height="12" rx="1" fill="currentColor" />
        <path d="M2 3h12M2 5.800h12" stroke="#fff" strokeWidth="1.500" strokeDasharray="1.500 1" />
        <path d="M4 9h8" stroke="#fff" strokeWidth="1.500" />
      </svg>
      <span className="relative">
        <svg viewBox="0 0 16 16" className="size-4">
          <circle cx="6" cy="4" r="3" fill="#b8c4d6" />
          <path d="M0 13c0-7 12-7 12 0z" fill="#b8c4d6" />
        </svg>
        <span className="absolute -right-px bottom-0 text-[8px] leading-none font-bold text-[#7d8fab]">17</span>
      </span>
      <svg viewBox="0 0 16 14" className="h-3.5 w-4">
        <path d="M5 0q3 2.500 6 0l5 3-2 4-2-1v8H4V6L2 7 0 3z" fill="currentColor" />
      </svg>
      <svg viewBox="0 0 14 14" className="size-3.5">
        <path d="M1 13l7-7" stroke="currentColor" strokeWidth="3" />
        <path d="M13.500 3.500c.5 4-3.500 6-6.500 4-2-3 0-7 4-6.500L9 3l2 2z" fill="currentColor" />
      </svg>
    </div>
  );
}

function AppMark({ className }: { className: string }) {
  return (
    <svg viewBox="0 0 24 24" className={className} aria-hidden="true">
      <rect width="24" height="24" rx="4" fill="#1a9af0" />
      <path d="M16 8c0-4-4-4-4-1v10c0 3-4 3-4 0M7 10c-4 0-4 4 0 4h9c4 0 4-4 1-4" fill="none" stroke="#fff" strokeWidth="1.800" strokeLinecap="round" />
    </svg>
  );
}

const apps: { name: string; art: ReactNode; state?: "run" | "active" | "stack" }[] = [
  {
    name: "pinwheel",
    art: (
      <g fill="#e6e6e6">
        <path d="M11.500 11C3 13 0 9 2 4c1-3 5-3 7-2 3 2 3 5 2.500 9z" />
        <path d="M13 11.500C11 3 15 0 20 2c3 1 3 5 2 7-2 3-5 3-9 2.500z" />
        <path d="M12.500 13c8.500-2 11.500 2 9.500 7-1 3-5 3-7 2-3-2-3-5-2.500-9z" />
        <path d="M11 12.500C13 21 9 24 4 22c-3-1-3-5-2-7 2-3 5-3 9-2.500z" />
      </g>
    ),
  },
  {
    name: "swirl",
    art: <path d="M21 3c-5 2-7-2-12 1-7 4-6 14 1 16 6 1.500 10-2 10-6 0-5-8-7-9-2-.5 3 3 4 6 2M21 3c-1 4-5 4-8 4-5 0-7 7-3 10 3 2 8 0 8-4" fill="none" stroke="#dcdcdc" strokeWidth="1.300" />,
  },
  {
    name: "edge",
    art: <path d="M2 11C3 4 7 1.500 12 1.500c6 0 10 4 10 10V14H8.500c.3 5 7 6 12 3v4.500c-8 4-17 1-17-7 0-4 3-6.500 6-8C5.500 7 3 8.500 2 11zM8.500 10H16c0-5-7-5-7.500 0z" fill="#0a78d7" />,
  },
  {
    name: "store",
    art: (
      <>
        <path d="M2 7l20-2v18L2 21z" fill="#fff" />
        <path d="M8 7c0-7 7-7 7-1" fill="none" stroke="#fff" strokeWidth="1.500" />
        <path d="M6 11l5-.5V14H6zM12 10.400l6-.5V14h-6zM6 15h5v3.700l-5-.3zM12 15h6v4.200l-6-.5z" fill="#061014" />
      </>
    ),
  },
  {
    name: "explorer",
    art: (
      <>
        <path d="M1 3h8l2 2h12v15H1z" fill="#f5c84c" />
        <path d="M1 7h22v14H1z" fill="#ffe394" />
        <path d="M5 21v-7h14v7h-4v-3.500H9V21z" fill="#35a8e0" />
      </>
    ),
  },
  {
    name: "glodon",
    state: "run",
    art: (
      <>
        <path d="M23 2c-2 3-5 3-8 3-6 0-9 5-8 9 1 5 9 5 9 0 0-2-2-3-4-2 1-4 9-4 10 2 1 5-4 10-10 10C5 24 0 19 1 12 2 4 9 0 15 2c3 1 6 1 8 0z" fill="#189cf0" />
        <path d="M3 9c2-5 7-6 12-5" stroke="#7fd0ff" fill="none" />
      </>
    ),
  },
  { name: "ggj", state: "active", art: <AppMark className="size-6" /> },
  {
    name: "browser",
    state: "stack",
    art: (
      <>
        <circle cx="12" cy="12" r="10.500" fill="#58b82c" stroke="#e8f6de" strokeWidth="1.500" />
        <path d="M6 12.500h12c0-8-12-8-12 0 0 6 8 6.500 11 2.500" fill="none" stroke="#fff" strokeWidth="2.800" />
        <path d="M3 23l4-3M17 3c2-2 4-2 5-2" stroke="#2d7d14" strokeWidth="2" fill="none" />
      </>
    ),
  },
];

function Taskbar() {
  return (
    <footer className="flex h-10 shrink-0 bg-[#020c10] text-white">
      <button aria-label="start" className="flex w-12 shrink-0 items-center justify-center bg-black">
        <svg viewBox="0 0 16 16" className="size-4">
          <path d="M0 2.200l6.800-1v6.300H0zM7.700 1.100L16 0v7.500H7.700zM0 8.400h6.800v6.300l-6.800-1zM7.700 8.400H16V16l-8.300-1.200z" fill="#fff" />
        </svg>
      </button>
      <label className="flex w-[344px] shrink-0 items-center bg-[#333] pl-2">
        <svg viewBox="0 0 22 22" className="size-[22px] shrink-0">
          <circle cx="11" cy="11" r="9" fill="none" stroke="#fff" strokeWidth="2.500" />
        </svg>
        <input placeholder="在这里输入你要搜索的内容" className="ml-1.5 min-w-0 flex-1 text-sm placeholder:text-[#969696]" />
        <svg viewBox="0 0 12 16" className="mr-3.5 h-4 w-3 shrink-0">
          <path d="M3.500.5h5v10h-5zM.5 8v4.500h11V8M6 13v2.500M3.500 15.500h5" fill="none" stroke="#a0a0a0" />
        </svg>
      </label>
      <nav className="flex gap-0.5 pl-0.5">
        {apps.map((a) => (
          <button
            key={a.name}
            aria-label={a.name}
            className={clsx(
              "flex w-12 flex-col items-center justify-end gap-[5px]",
              a.state === "active" && "bg-[#33393c]",
            )}
          >
            <svg viewBox="0 0 24 24" className="size-6">
              {a.art}
            </svg>
            <span className={clsx("h-0.5", a.state && "bg-[#76b9ed]", a.state === "active" ? "w-full" : "w-10")} />
          </button>
        ))}
      </nav>
      <div className="mr-[13px] ml-auto flex w-12 flex-col items-center pt-[3px] text-xs leading-[17px] whitespace-nowrap">
        <span>28%</span>
        <span>CPU使用</span>
      </div>
      <div className="flex shrink-0 items-center gap-px *:flex *:w-6 *:justify-center">
        <span>
          <svg viewBox="0 0 12 8" className="h-2 w-3"><path d="M1 7l5-5 5 5" fill="none" stroke="#fff" strokeWidth="1.300" /></svg>
        </span>
        <span>
          <svg viewBox="0 0 16 12" className="h-3 w-4">
            <path d="M5.500 3.500h9v7h-9zM15.500 5.500v3M.5 2v3h4V2M1.500 0v2M3.500 0v2M2.500 5v3h3" fill="none" stroke="#fff" />
            <path d="M7 5h6v4H7z" fill="#fff" />
          </svg>
        </span>
        <span>
          <svg viewBox="0 0 13 13" className="size-[13px]">
            <path d="M1 13C1 6 6 1 13 1M4 13c0-5 4-9 9-9M7 13c0-3.500 2.500-6 6-6" fill="none" stroke="#a8acae" strokeWidth="1.200" />
            <circle cx="11.500" cy="11.500" r="1.500" fill="#fff" />
          </svg>
        </span>
        <span>
          <svg viewBox="0 0 17 14" className="h-3.5 w-[17px]">
            <path d="M1 5h2.500L7 1.500v11L3.500 9H1z" fill="none" stroke="#fff" />
            <path d="M9.500 5q1.500 2 0 4M11.500 3q3 4 0 8M13.500 1.500q4.500 5.500 0 11" fill="none" stroke="#fff" />
          </svg>
        </span>
        <span className="text-lg leading-none font-semibold">A</span>
        <span>
          <SogouMark className="size-4" />
        </span>
      </div>
      <div className="ml-[13px] flex w-[60px] shrink-0 flex-col items-center pt-0.5 text-xs leading-[18px]">
        <span>22:27</span>
        <span>2017/8/26</span>
      </div>
      <button aria-label="notifications" className="relative flex w-[54px] shrink-0 items-center justify-center">
        <svg viewBox="0 0 16 16" className="size-4">
          <path d="M0 0h16v12H8l-4 4v-4H0z" fill="#fff" />
          <path d="M3 3.500h10M3 6h10M3 8.500h7" stroke="#061014" />
        </svg>
        <span className="absolute top-[18px] left-[25px] flex size-4 items-center justify-center rounded-full border border-[#888] bg-[#3a3d3f] text-xs leading-none font-semibold">8</span>
      </button>
      <span className="w-[5px] shrink-0 border-l border-[#555]" />
    </footer>
  );
}

export default function App() {
  return (
    <div className="flex h-screen flex-col overflow-hidden bg-[#f0f0f0] font-['Open_Sans','Noto_Sans_CJK_SC',sans-serif] text-xs leading-4 text-black">
      <header className="relative flex h-6 shrink-0 items-center bg-white pl-0.5">
        <AppMark className="size-4" />
        <h1 className="ml-[5px] whitespace-nowrap">
          <Mixed text="广联达BIM钢筋算量软件 GGJ2013 - [C:\Users\Administrator.PC-201404NRHM\Desktop\白龙村-2016-08-25-13-27-07(2166版).GGJ12]" />
        </h1>
        <div className="absolute -top-[29px] left-[399px] z-10 flex size-12 items-end justify-center rounded-full border-2 border-[#d8e6da] bg-linear-to-b from-[#5fd068] to-[#3fb858] pb-1 text-[13px] leading-3 font-bold text-white shadow-md">
          65
        </div>
        <div className="ml-auto flex shrink-0 self-stretch pr-0.5 *:flex *:w-[46px] *:items-center *:justify-center">
          <button aria-label="minimize">
            <svg viewBox="0 0 10 10" className="size-2.5"><path d="M0 5.500h10" stroke="#000" /></svg>
          </button>
          <button aria-label="restore">
            <svg viewBox="0 0 10 10" className="size-2.5"><path d="M.5 2.500h7v7h-7zM2.500 2.500v-2h7v7h-2" fill="none" stroke="#000" /></svg>
          </button>
          <button aria-label="close">
            <svg viewBox="0 0 10 10" className="size-2.5"><path d="M0 0l10 10M10 0L0 10" stroke="#000" /></svg>
          </button>
        </div>
      </header>

      <nav className="flex h-7 shrink-0 items-center overflow-hidden">
        <div className="flex shrink-0 gap-2.5 pr-1.5 pl-[7px] whitespace-nowrap">
          {menus.map((m) => (
            <button key={m}>
              <Mixed text={m} />
            </button>
          ))}
        </div>
        <Tool icon="newChange" label="新建变更" arrow="far" />
        <Tool icon="mascot" label="广小二" />
        <div className="ml-1 flex h-full w-[187px] shrink items-center justify-center bg-linear-to-b from-[#fcfcfc] to-[#f1f1f1]">
          <a href="#faq" className="whitespace-nowrap text-[#663300]">为什么筏板XY方向布置..</a>
        </div>
        <div className={clsx(panel, "ml-0.5 min-w-0 flex-1")}>
          <Tool icon="user" label="13907298339" arrow="far" />
          <span className="ml-1 whitespace-nowrap">造价豆:0</span>
          <span className="ml-1"><Tool icon="bell" /></span>
          <More className="mr-1 mb-3 ml-auto" />
        </div>
      </nav>

      <div className="flex h-8 shrink-0 gap-[3px] overflow-hidden pb-px">
        <div className={clsx(panel, "w-[151px] shrink-0 pl-0.5")}>
          <Tool icon="newFile" />
          <Tool icon="open" arrow="far" />
          <Tool icon="save" />
          <Sep />
          <Tool icon="undo" arrow="far" />
          <More className="mr-0.5 mb-3 ml-auto" />
        </div>
        <div className={clsx(panel, "w-[548px] shrink-0")}>
          <Tools items={mainTools} />
          <More className="mr-0.5 mb-3 ml-auto" />
        </div>
        <div className={clsx(panel, "min-w-0 flex-1")}>
          <span className="flex h-6 items-center bg-white">
            <Tool icon="cube" label="三维" arrow="far" />
          </span>
          <Tools items={viewTools} />
          <More className="mr-1 mb-3 ml-auto" />
        </div>
      </div>

      <div className="flex min-h-0 flex-1 gap-[5px]">
        <Sidebar />
        <main className="flex min-w-0 flex-1 flex-col">
          <div className="flex h-[26px] shrink-0">
            <div className={clsx(panel, "pr-0.5")}>
              <Grip />
              <Tools items={editTools} />
            </div>
          </div>
          <div className="flex h-7 shrink-0 overflow-hidden pt-0.5">
            <div className={panel}>
              <Grip />
              <Combo name="楼层" value="第5层" className="w-[57px]" />
              <Combo name="构件类型" value="梁" className="w-[68px]" />
              <Combo name="构件类别" value="梁" className="w-[68px]" />
              <Combo name="构件" value="XL-5" className="w-[68px]" />
              <Combo name="分层" value="分层1" className="w-[68px]" />
              <Tools
                items={[
                  "|",
                  { icon: "props", label: "属性" },
                  { icon: "editBar", label: "编辑钢筋" },
                  { icon: "list", label: "构件列表" },
                  { icon: "pick", label: "拾取构件" },
                ]}
              />
              <Grip />
              <Tools
                items={[
                  { icon: "twoPoint", label: "两点" },
                  { icon: "parallel", label: "平行" },
                  { icon: "pointAngle", label: "点角", arrow: "far" },
                  { icon: "threeAxis", label: "三点辅轴", arrow: "far" },
                  { icon: "erase", label: "删除辅轴" },
                ]}
              />
              <span className="flex h-6 shrink-0 items-center border border-[#1a7fd6] bg-[#b5d7f1]">
                <Tool icon="dimension" label="尺寸标注" />
                <button aria-label="尺寸标注选项" className="flex h-full items-center border-l border-[#1a7fd6] px-px">
                  <Caret />
                </button>
              </span>
            </div>
          </div>
          <div className="flex h-[30px] shrink-0 gap-[7px] overflow-hidden pt-0.5">
            <div className={clsx(panel, "min-w-0 flex-1")}>
              <Grip />
              <Tool icon="cursor" label="选择" arrow="far" />
              <Sep />
              <Tool icon="line" label="直线" />
              <Tool icon="pointLen" label="点加长度" />
              <Tool icon="arc" label="三点画弧" arrow="far" />
              <Combo name="画弧方式" value="" className="w-[54px]" />
              <Tools items={beamTools} />
              <More className="mr-1 mb-3 ml-auto" />
            </div>
            <div className={clsx(panel, "w-7 shrink-0")}>
              <Grip />
            </div>
          </div>
          <Viewport />
          <SnapBar />
        </main>
      </div>

      <StatusBar />
      <Taskbar />
    </div>
  );
}
